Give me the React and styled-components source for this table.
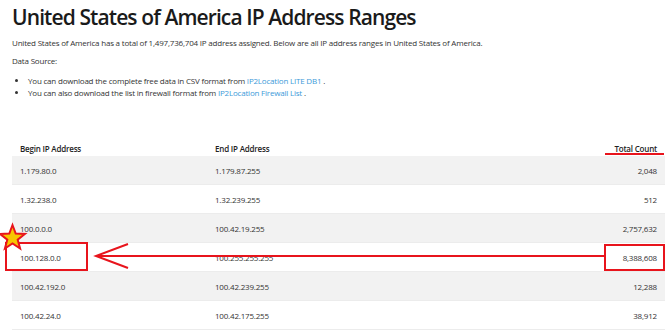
import React from 'react'
import styled, { createGlobalStyle } from 'styled-components'

const GlobalStyle = createGlobalStyle`
  body {
    margin: 0;
    background: #fff;
    font-family: 'Open Sans', 'Noto Sans', sans-serif;
    color: #333;
  }
`

const Page = styled.div`
  position: relative;
  width: 670px;
  height: 331px;
  overflow: hidden;
  padding: 0 5px 0 12px;
  box-sizing: border-box;
`

const Title = styled.h1`
  margin: 0;
  padding-top: 3px;
  font-size: 21px;
  line-height: 29px;
  font-weight: 600;
  letter-spacing: -0.9px;
  color: #1a1a1a;
  white-space: nowrap;
`

const Para = styled.p`
  margin: ${(p) => p.top || 4}px 0 0;
  font-size: 8px;
  line-height: 14px;
  letter-spacing: -0.2px;
  white-space: nowrap;
`

const List = styled.ul`
  margin: 7px 0 0;
  padding-left: 16px;
  font-size: 8px;
  line-height: 12px;
  letter-spacing: -0.2px;
`

const Link = styled.a`
  color: #3d9ad9;
  text-decoration: none;
`

const Table = styled.table`
  margin-top: 38px;
  width: 653px;
  table-layout: fixed;
  border-collapse: collapse;
  font-size: 8px;
  letter-spacing: -0.2px;
  color: #333;
`

const Th = styled.th`
  padding: 5px 8px 1px;
  line-height: 13px;
  font-weight: 600;
  color: #222;
  text-align: ${(p) => p.align || 'left'};
  width: ${(p) => p.w || 'auto'};
`

const Row = styled.tr`
  background: ${(p) => (p.striped ? '#f2f2f2' : '#fff')};
  border-bottom: 1px solid #ececec;
`

const Td = styled.td`
  padding: 8px 8px 7px;
  line-height: 13px;
  text-align: ${(p) => p.align || 'left'};
`

// annotations drawn over the table
const Mark = styled.div`
  position: absolute;
  box-sizing: border-box;
  border: 2px solid #e8141c;
  left: ${(p) => p.x}px;
  top: ${(p) => p.y}px;
  width: ${(p) => p.w}px;
  height: ${(p) => p.h}px;
`

const Underline = styled.div`
  position: absolute;
  left: 605px;
  top: 153px;
  width: 59px;
  height: 2px;
  background: #e8141c;
`

const Overlay = styled.svg`
  position: absolute;
  left: 0;
  top: 0;
  pointer-events: none;
`

const rows = [
  ['1.179.80.0', '1.179.87.255', '2,048'],
  ['1.32.238.0', '1.32.239.255', '512'],
  ['100.0.0.0', '100.42.19.255', '2,757,632'],
  ['100.128.0.0', '100.255.255.255', '8,388,608'],
  ['100.42.192.0', '100.42.239.255', '12,288'],
  ['100.42.24.0', '100.42.175.255', '38,912'],
]

function starPoints(cx, cy, ro, ri) {
  const pts = []
  for (let i = 0; i < 10; i++) {
    const r = i % 2 === 0 ? ro : ri
    const a = -Math.PI / 2 + (i * Math.PI) / 5
    pts.push(`${(cx + r * Math.cos(a)).toFixed(1)},${(cy + r * Math.sin(a)).toFixed(1)}`)
  }
  return pts.join(' ')
}

export default function App() {
  return (
    <Page>
      <GlobalStyle />
      <Title>United States of America IP Address Ranges</Title>
      <Para>
        United States of America has a total of 1,497,736,704 IP address assigned. Below are all IP
        address ranges in United States of America.
      </Para>
      <Para top={4}>Data Source:</Para>
      <List>
        <li>
          You can download the complete free data in CSV format from{' '}
          <Link href="#">IP2Location LITE DB1</Link> .
        </li>
        <li>
          You can also download the list in firewall format from{' '}
          <Link href="#">IP2Location Firewall List</Link> .
        </li>
      </List>
      <Table>
        <thead>
          <tr>
            <Th w="179px">Begin IP Address</Th>
            <Th w="260px">End IP Address</Th>
            <Th align="right">Total Count</Th>
          </tr>
        </thead>
        <tbody>
          {rows.map((r, i) => (
            <Row key={r[0]} striped={i % 2 === 0}>
              <Td>{r[0]}</Td>
              <Td>{r[1]}</Td>
              <Td align="right">{r[2]}</Td>
            </Row>
          ))}
        </tbody>
      </Table>

      <Underline />
      <Mark x={5} y={242} w={83} h={29} />
      <Mark x={604} y={244} w={61} h={27} />
      <Overlay width="670" height="331">
        <line x1="96" y1="256" x2="605" y2="256" stroke="#e8141c" strokeWidth="2" />
        <polyline points="128,244 96,256 128,268" fill="none" stroke="#e8141c" strokeWidth="2" />
        <polygon
          points={starPoints(12.5, 238, 13, 5.5)}
          fill="#f7c600"
          stroke="#e8141c"
          strokeWidth="2"
          strokeLinejoin="miter"
        />
      </Overlay>
    </Page>
  )
}
